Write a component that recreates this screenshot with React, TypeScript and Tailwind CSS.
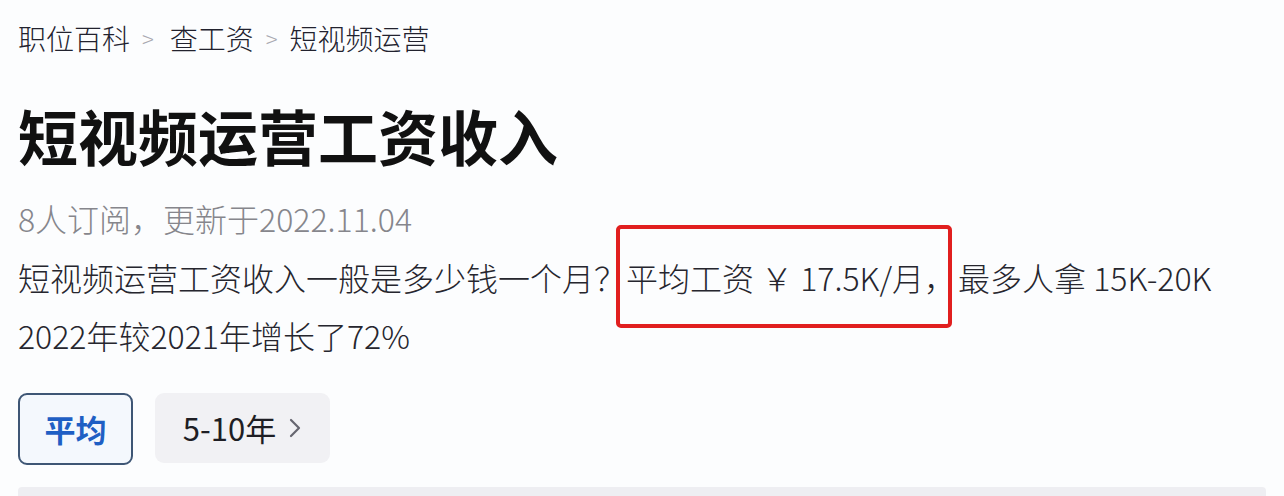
import React from "react";

export default function App() {
  const font = { fontFamily: '"Noto Sans CJK SC", "Noto Sans", sans-serif' };
  return (
    <div className="w-[1284px] h-[496px] overflow-hidden bg-[#fcfdfe]" style={font}>
      <div className="px-[18px] pt-[18px]">
        <div className="flex items-center h-[40px] text-[28px] font-light text-[#22222e] leading-[40px]">
          <span>职位百科</span>
          <span className="mx-[12px] text-[#a8a8b0] text-[22px]">&gt;</span>
          <span className="ml-[4px]">查工资</span>
          <span className="mx-[12px] text-[#a8a8b0] text-[22px]">&gt;</span>
          <span>短视频运营</span>
        </div>
        <h1 className="mt-[41px] text-[60px] leading-[72px] font-bold text-[#111111]">短视频运营工资收入</h1>
        <div className="mt-[27px] text-[32px] font-light leading-[40px] text-[#86868c]">8人订阅，更新于2022.11.04</div>
        <p className="mt-[10px] text-[32px] font-light leading-[58px] text-[#26262e]">
          短视频运营工资收入一般是多少钱一个月？
          <span className="relative">
            平均工资 ￥ 17.5K/月<span className="tracking-[-12px]">，</span>
            <span className="absolute -left-[10px] -right-[8px] -top-[29px] -bottom-[28px] border-[4px] border-[#e11f1f] rounded-[5px]"></span>
          </span>
          <span className="ml-[14px]">最多人拿 15K-20K</span>
          <br />
          2022年较2021年增长了72%
        </p>
        <div className="mt-[29px] flex items-start gap-[22px]">
          <div className="w-[115px] h-[72px] flex items-center justify-center rounded-[9px] border-[2px] border-[#3e5675] bg-[#f4f8fd] text-[31px] font-bold text-[#1f5fc4]">
            平均
          </div>
          <div className="w-[175px] h-[70px] flex items-center justify-center gap-[12px] rounded-[9px] bg-[#f1f1f4] text-[31px] text-[#1e1e24]">
            <span>5-10年</span>
            <svg width="14" height="22" viewBox="0 0 14 22" fill="none">
              <path d="M3 3l8 8-8 8" stroke="#666670" strokeWidth="2.2" strokeLinecap="round" strokeLinejoin="round" />
            </svg>
          </div>
        </div>
        <div className="mt-[22px] h-[12px] bg-[#eeeef2] rounded-t-[4px]"></div>
      </div>
    </div>
  );
}
